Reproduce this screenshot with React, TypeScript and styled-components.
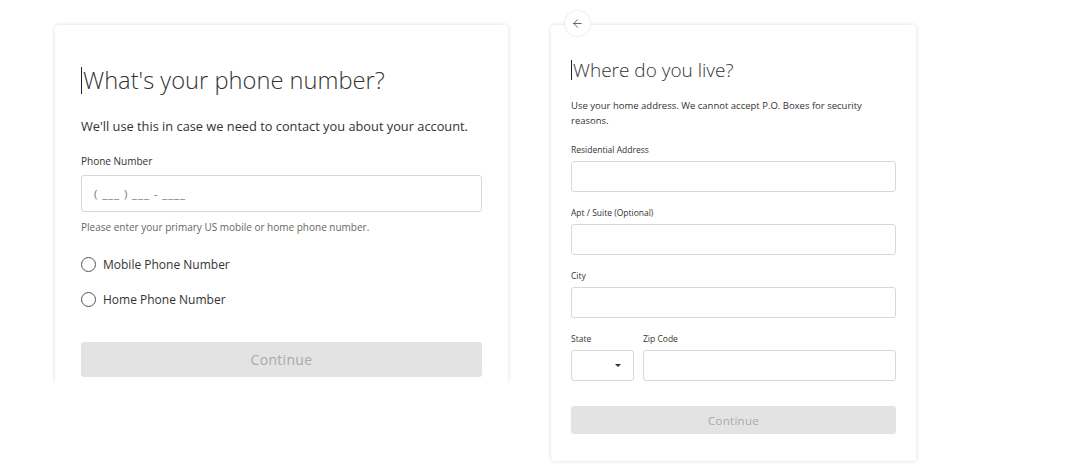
import styled, { createGlobalStyle } from 'styled-components';
import { ArrowLeft } from 'lucide-react';

const GlobalStyle = createGlobalStyle`
  html, body {
    margin: 0;
    padding: 0;
    background: #fff;
    font-family: "Open Sans", "Liberation Sans", sans-serif;
    color: #333;
  }
`;

const Page = styled.div`
  display: flex;
  align-items: flex-start;
  width: 1080px;
  height: 475px;
  padding: 25px 0 0 55px;
  box-sizing: border-box;
  gap: 43px;
`;

const PhoneCard = styled.section`
  width: 453px;
  height: 358px;
  padding: 40px 26px 0;
  box-sizing: border-box;
  background: #fff;
  border-radius: 4px 4px 0 0;
  box-shadow: 0 0 4px 0 rgba(0, 0, 0, 0.14);
  clip-path: inset(-10px -10px 0 -10px);
  display: flex;
  flex-direction: column;
`;

const AddressCard = styled.section`
  position: relative;
  width: 365px;
  padding: 32px 20px 27px;
  box-sizing: border-box;
  background: #fff;
  border-radius: 4px;
  box-shadow: 0 0 4px 0 rgba(0, 0, 0, 0.14);
  display: flex;
  flex-direction: column;
`;

const BackButton = styled.button`
  position: absolute;
  top: -14px;
  left: 14px;
  width: 25px;
  height: 25px;
  border-radius: 50%;
  border: none;
  background: #fff;
  box-shadow: 0 0 3px 0 rgba(0, 0, 0, 0.15);
  display: flex;
  align-items: center;
  justify-content: center;
  padding: 0;
  color: #444;
`;

const Title = styled.h1<{ $size: number; $line: number }>`
  margin: 0;
  font-size: ${(p) => p.$size}px;
  line-height: ${(p) => p.$line}px;
  font-weight: 300;
  color: #333;
  display: flex;
  align-items: center;
`;

const Caret = styled.span<{ $h: number }>`
  display: inline-block;
  width: 1px;
  height: ${(p) => p.$h}px;
  background: #222;
  margin-right: 1px;
`;

const Text = styled.p<{ $size: number; $line: number; $mt: number; $color?: string }>`
  margin: ${(p) => p.$mt}px 0 0;
  font-size: ${(p) => p.$size}px;
  line-height: ${(p) => p.$line}px;
  color: ${(p) => p.$color || '#333'};
`;

const Label = styled.label<{ $size: number; $line: number; $mt: number }>`
  display: block;
  margin-top: ${(p) => p.$mt}px;
  font-size: ${(p) => p.$size}px;
  line-height: ${(p) => p.$line}px;
  color: #333;
`;

const Field = styled.div<{ $h: number; $mt: number }>`
  margin-top: ${(p) => p.$mt}px;
  height: ${(p) => p.$h}px;
  border: 1px solid #d8d8d8;
  border-radius: 3px;
  box-sizing: border-box;
  display: flex;
  align-items: center;
  padding: 0 12px;
  background: #fff;
  font-size: 11.5px;
  color: #777;
  letter-spacing: 0.9px;
`;

const RadioRow = styled.div<{ $mt: number }>`
  margin-top: ${(p) => p.$mt}px;
  display: flex;
  align-items: center;
  gap: 7px;
  height: 20px;
  font-size: 12px;
  color: #333;
`;

const RadioCircle = styled.span`
  width: 15px;
  height: 15px;
  border-radius: 50%;
  border: 1.4px solid #555;
  box-sizing: border-box;
`;

const ContinueButton = styled.button<{ $h: number; $mt: number; $size: number }>`
  margin-top: ${(p) => p.$mt}px;
  height: ${(p) => p.$h}px;
  width: 100%;
  border: none;
  border-radius: 3px;
  background: #e3e3e3;
  color: #aaa;
  font-family: inherit;
  font-size: ${(p) => p.$size}px;
  letter-spacing: 0.3px;
`;

const Group = styled.div`
  display: flex;
  flex-direction: column;
`;

const SplitRow = styled.div`
  display: grid;
  grid-template-columns: 63px 1fr;
  gap: 9px;
`;

const SelectBox = styled.div`
  margin-top: 5px;
  height: 31px;
  border: 1px solid #d8d8d8;
  border-radius: 3px;
  box-sizing: border-box;
  display: flex;
  align-items: center;
  justify-content: flex-end;
  padding-right: 12px;

  &::after {
    content: '';
    border-left: 3px solid transparent;
    border-right: 3px solid transparent;
    border-top: 3.5px solid #333;
  }
`;

const AddressField = ({ label, mt }: { label: string; mt: number }) => (
  <Group>
    <Label $size={8.5} $line={12} $mt={mt}>{label}</Label>
    <Field $h={31} $mt={5} />
  </Group>
);

export default function App() {
  return (
    <>
      <GlobalStyle />
      <Page>
        <PhoneCard>
          <Title $size={23.7} $line={30}>
            <Caret $h={27} />
            What's your phone number?
          </Title>
          <Text $size={12.8} $line={18} $mt={22}>
            We'll use this in case we need to contact you about your account.
          </Text>
          <Label $size={10} $line={16} $mt={18}>Phone Number</Label>
          <Field $h={37} $mt={6}>( ___ ) ___ - ____</Field>
          <Text $size={10} $line={14} $mt={8} $color="#666">
            Please enter your primary US mobile or home phone number.
          </Text>
          <RadioRow $mt={20}>
            <RadioCircle />
            Mobile Phone Number
          </RadioRow>
          <RadioRow $mt={15}>
            <RadioCircle />
            Home Phone Number
          </RadioRow>
          <ContinueButton $h={35} $mt={33} $size={14}>Continue</ContinueButton>
        </PhoneCard>

        <AddressCard>
          <BackButton aria-label="Back">
            <ArrowLeft size={13} strokeWidth={1.5} />
          </BackButton>
          <Title $size={19} $line={26}>
            <Caret $h={20} />
            Where do you live?
          </Title>
          <Text $size={9.5} $line={15} $mt={15}>
            Use your home address. We cannot accept P.O. Boxes for security reasons.
          </Text>
          <AddressField label="Residential Address" mt={16} />
          <AddressField label="Apt / Suite (Optional)" mt={15} />
          <AddressField label="City" mt={15} />
          <SplitRow>
            <Group>
              <Label $size={8.5} $line={12} $mt={15}>State</Label>
              <SelectBox />
            </Group>
            <Group>
              <Label $size={8.5} $line={12} $mt={15}>Zip Code</Label>
              <Field $h={31} $mt={5} />
            </Group>
          </SplitRow>
          <ContinueButton $h={28} $mt={25} $size={11.5}>Continue</ContinueButton>
        </AddressCard>
      </Page>
    </>
  );
}
